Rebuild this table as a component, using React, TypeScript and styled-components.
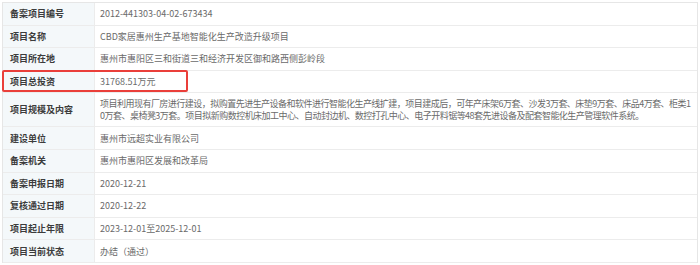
import styled, { createGlobalStyle } from "styled-components";

const GlobalStyle = createGlobalStyle`
  html, body {
    margin: 0;
    padding: 0;
    background: #ffffff;
  }
  body {
    font-family: "Noto Sans CJK SC", "Noto Sans", sans-serif;
  }
`;

const Page = styled.div`
  padding: 2px 2px 0 2px;
  width: 700px;
  box-sizing: border-box;
`;

const Table = styled.div`
  display: flex;
  flex-direction: column;
  border: 1px solid #e6e6e6;
  border-bottom: none;
`;

const Row = styled.div<{ $tall?: boolean }>`
  position: relative;
  display: grid;
  grid-template-columns: 92px 1fr;
  height: ${(p) => (p.$tall ? "34px" : "22.6px")};
  border-bottom: 1px solid #ececec;
  box-sizing: border-box;
`;

const Label = styled.div`
  display: flex;
  align-items: center;
  padding-left: 7px;
  background: #f4f8fa;
  border-right: 1px solid #ececec;
  color: #3c3c3c;
  font-size: 9px;
  font-weight: 700;
  white-space: nowrap;
`;

const Value = styled.div<{ $multi?: boolean }>`
  display: flex;
  align-items: center;
  padding: 0 5px 0 5px;
  color: #6a6a6a;
  font-size: 9px;
  line-height: ${(p) => (p.$multi ? "12px" : "normal")};
  letter-spacing: ${(p) => (p.$multi ? "-0.52px" : "normal")};
  word-break: break-all;
`;

const Highlight = styled.div`
  position: absolute;
  left: -1px;
  top: -1px;
  width: 186px;
  height: 22px;
  border: 2px solid #ea3f3a;
  border-radius: 2px;
  box-sizing: border-box;
  pointer-events: none;
`;

type Item = { label: string; value: string; tall?: boolean; mark?: boolean };

const items: Item[] = [
  { label: "备案项目编号", value: "2012-441303-04-02-673434" },
  { label: "项目名称", value: "CBD家居惠州生产基地智能化生产改造升级项目" },
  { label: "项目所在地", value: "惠州市惠阳区三和街道三和经济开发区御和路西侧彭岭段" },
  { label: "项目总投资", value: "31768.51万元", mark: true },
  {
    label: "项目规模及内容",
    value:
      "项目利用现有厂房进行建设，拟购置先进生产设备和软件进行智能化生产线扩建，项目建成后，可年产床架6万套、沙发3万套、床垫9万套、床品4万套、柜类10万套、桌椅凳3万套。项目拟新购数控机床加工中心、自动封边机、数控打孔中心、电子开料锯等48套先进设备及配套智能化生产管理软件系统。",
    tall: true,
  },
  { label: "建设单位", value: "惠州市远超实业有限公司" },
  { label: "备案机关", value: "惠州市惠阳区发展和改革局" },
  { label: "备案申报日期", value: "2020-12-21" },
  { label: "复核通过日期", value: "2020-12-22" },
  { label: "项目起止年限", value: "2023-12-01至2025-12-01" },
  { label: "项目当前状态", value: "办结（通过）" },
];

export default function App() {
  return (
    <Page>
      <GlobalStyle />
      <Table>
        {items.map((it) => (
          <Row key={it.label} $tall={it.tall}>
            <Label>{it.label}</Label>
            <Value $multi={it.tall}>{it.value}</Value>
            {it.mark && <Highlight />}
          </Row>
        ))}
      </Table>
    </Page>
  );
}
